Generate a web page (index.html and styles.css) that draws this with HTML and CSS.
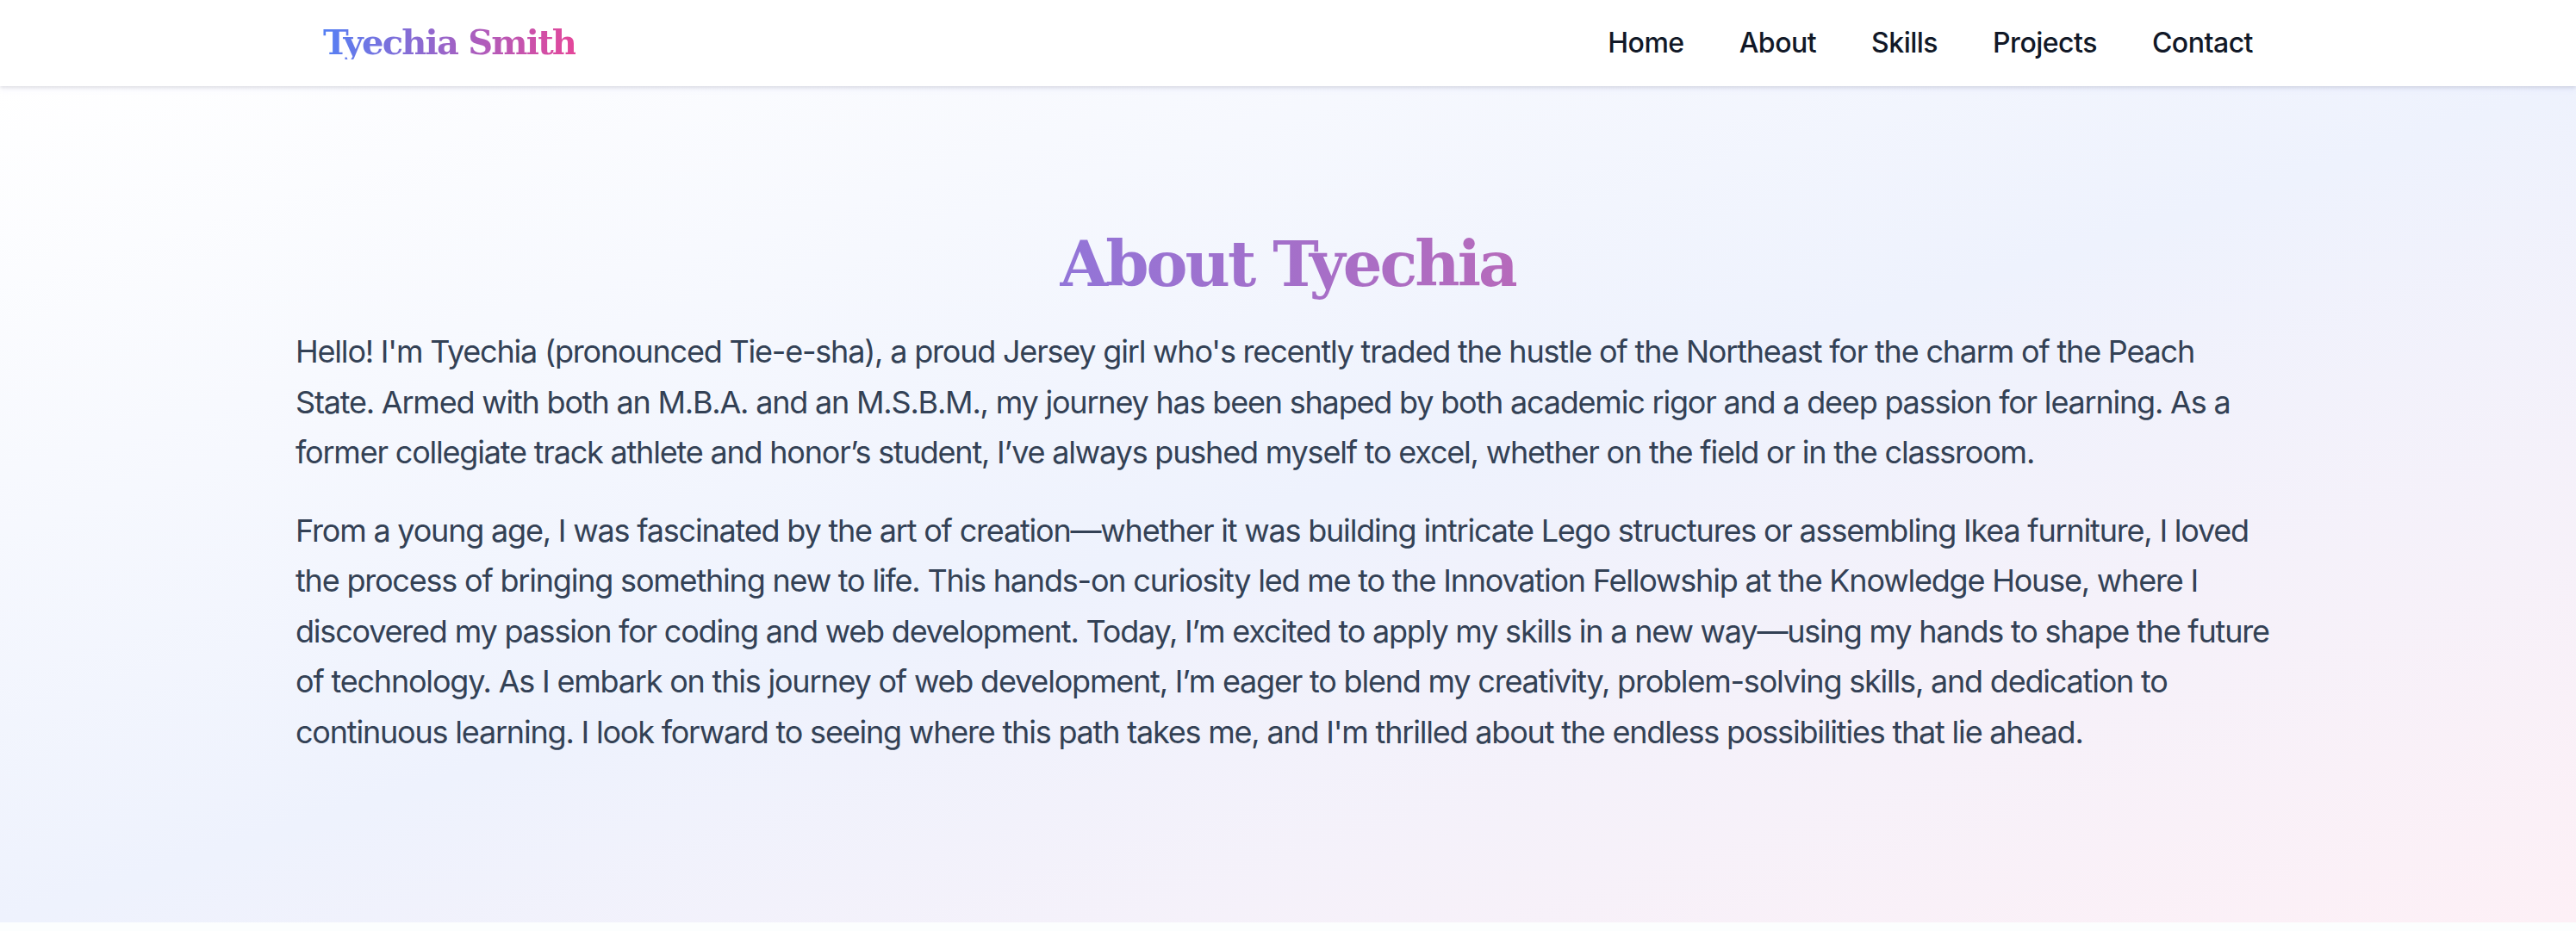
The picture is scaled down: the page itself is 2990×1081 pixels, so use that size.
FILE: index.html
```html
<!DOCTYPE html>
<html lang="en">
<head>
<meta charset="utf-8">
<title>Tyechia Smith</title>
<link rel="stylesheet" href="styles.css">
</head>
<body>
<header class="site-header">
  <div class="header-inner">
    <a class="logo" href="#">Tyechia Smith</a>
    <nav class="nav">
      <a href="#">Home</a>
      <a href="#">About</a>
      <a href="#">Skills</a>
      <a href="#">Projects</a>
      <a href="#">Contact</a>
    </nav>
  </div>
</header>
<main>
  <section class="about">
    <div class="container">
      <h2 class="about-title"><span>About Tyechia</span></h2>
      <p>Hello! I'm Tyechia (pronounced Tie-e-sha), a proud Jersey girl who's recently traded the hustle of the Northeast for the charm of the Peach State. Armed with both an M.B.A. and an M.S.B.M., my journey has been shaped by both academic rigor and a deep passion for learning. As a former collegiate track athlete and honor’s student, I’ve always pushed myself to excel, whether on the field or in the classroom.</p>
      <p>From a young age, I was fascinated by the art of creation—whether it was building intricate Lego structures or assembling Ikea furniture, I loved the process of bringing something new to life. This hands-on curiosity led me to the Innovation Fellowship at the Knowledge House, where I discovered my passion for coding and web development. Today, I’m excited to apply my skills in a new way—using my hands to shape the future of technology. As I embark on this journey of web development, I’m eager to blend my creativity, problem-solving skills, and dedication to continuous learning. I look forward to seeing where this path takes me, and I'm thrilled about the endless possibilities that lie ahead.</p>
    </div>
  </section>
  <section class="next"></section>
</main>
</body>
</html>
```

FILE: styles.css
```css
* { box-sizing: border-box; }
html, body { margin: 0; padding: 0; }
body {
  font-family: Inter, "Noto Sans", sans-serif;
  background: #fcfdfe;
  color: #334155;
}
a { text-decoration: none; }

.site-header {
  position: relative;
  z-index: 2;
  height: 100px;
  background: #ffffff;
  box-shadow: 0 2px 4px rgba(0, 0, 0, 0.10), 0 4px 8px rgba(99, 102, 241, 0.05);
}
.header-inner {
  max-width: 2304px;
  height: 100%;
  margin: 0 auto;
  padding: 0 32px;
  display: flex;
  align-items: center;
  justify-content: space-between;
}
.logo {
  font-family: "DejaVu Serif", Georgia, serif;
  font-weight: 700;
  font-size: 40px;
  letter-spacing: -1.8px;
  line-height: 1;
  background: linear-gradient(90deg, #5580f4, #e4479a);
  -webkit-background-clip: text;
  background-clip: text;
  color: transparent;
  margin-top: -2px;
}
.nav {
  display: flex;
  gap: 64px;
}
.nav a {
  font-size: 32px;
  font-weight: 500;
  color: #111827;
  line-height: 1;
  letter-spacing: -0.5px;
}

.about {
  min-height: 971px;
  padding: 167px 0 100px;
  background: linear-gradient(to bottom right, #ffffff 0%, #eef2fd 50%, #fdf0f6 100%);
}
.container {
  max-width: 2304px;
  margin: 0 auto;
}
.about-title {
  margin: 0 0 32px;
  text-align: center;
  font-family: "DejaVu Serif", Georgia, serif;
  font-weight: 700;
  font-size: 72px;
  line-height: 80px;
  letter-spacing: -3px;
}
.about-title span {
  background: linear-gradient(90deg, #9275d8, #b66abb);
  -webkit-background-clip: text;
  background-clip: text;
  color: transparent;
}
.about p {
  margin: 0 0 32px;
  padding-right: 8px;
  font-size: 36px;
  line-height: 58.5px;
  letter-spacing: -1.2px;
  color: #334155;
}
.about p:last-child { margin-bottom: 0; }

.next {
  height: 10px;
  background: #fcfefe;
}
```
